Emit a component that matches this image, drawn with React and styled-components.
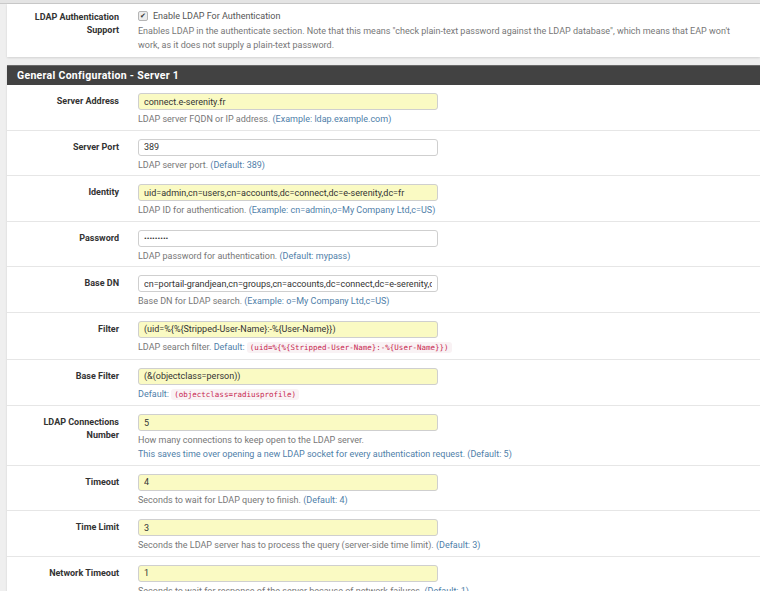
import React from 'react';
import styled, { createGlobalStyle } from 'styled-components';

const GlobalStyle = createGlobalStyle`
	body {
		margin: 0;
		background: #efefef;
		font-family: Roboto, 'Liberation Sans', sans-serif;
		color: #333;
	}
`;

const blue = '#4f80a9';

const fields = [
	{
		label: 'Server Address',
		value: 'connect.e-serenity.fr',
		filled: true,
		help: [['LDAP server FQDN or IP address. ', '(Example: ldap.example.com)']]
	},
	{
		label: 'Server Port',
		value: '389',
		help: [['LDAP server port. ', '(Default: 389)']]
	},
	{
		label: 'Identity',
		value: 'uid=admin,cn=users,cn=accounts,dc=connect,dc=e-serenity,dc=fr',
		filled: true,
		help: [['LDAP ID for authentication. ', '(Example: cn=admin,o=My Company Ltd,c=US)']]
	},
	{
		label: 'Password',
		value: '•••••••••',
		secret: true,
		help: [['LDAP password for authentication. ', '(Default: mypass)']]
	},
	{
		label: 'Base DN',
		value: 'cn=portail-grandjean,cn=groups,cn=accounts,dc=connect,dc=e-serenity,dc=fr',
		help: [['Base DN for LDAP search. ', '(Example: o=My Company Ltd,c=US)']]
	},
	{
		label: 'Filter',
		value: '(uid=%{%{Stripped-User-Name}:-%{User-Name}})',
		filled: true,
		help: [['LDAP search filter. ', 'Default:', '(uid=%{%{Stripped-User-Name}:-%{User-Name}})']]
	},
	{
		label: 'Base Filter',
		value: '(&(objectclass=person))',
		filled: true,
		help: [['', 'Default:', '(objectclass=radiusprofile)']]
	},
	{
		label: ['LDAP Connections', 'Number'],
		value: '5',
		filled: true,
		help: [
			['How many connections to keep open to the LDAP server.', ''],
			['', 'This saves time over opening a new LDAP socket for every authentication request. (Default: 5)']
		]
	},
	{
		label: 'Timeout',
		value: '4',
		filled: true,
		help: [['Seconds to wait for LDAP query to finish. ', '(Default: 4)']]
	},
	{
		label: 'Time Limit',
		value: '3',
		filled: true,
		help: [['Seconds the LDAP server has to process the query (server-side time limit). ', '(Default: 3)']]
	},
	{
		label: 'Network Timeout',
		value: '1',
		filled: true,
		help: [['Seconds to wait for response of the server because of network failures. ', '(Default: 1)']]
	}
];

export default function App() {
	return (
		<Page>
			<GlobalStyle />
			<TopStrip />
			<Panel>
				<Row $top>
					<Label>
						LDAP Authentication
						<br />
						Support
					</Label>
					<div>
						<CheckLine>
							<CheckBox>✔</CheckBox>
							Enable LDAP For Authentication
						</CheckLine>
						<Help $tight>
							Enables LDAP in the authenticate section. Note that this means "check plain-text password
							against the LDAP database", which means that EAP won't work, as it does not supply a
							plain-text password.
						</Help>
					</div>
				</Row>
			</Panel>
			<Panel $gap>
				<Heading>General Configuration - Server 1</Heading>
				{fields.map((f, i) => (
					<Row key={i}>
						<Label>
							{Array.isArray(f.label) ? (
								<>
									{f.label[0]}
									<br />
									{f.label[1]}
								</>
							) : (
								f.label
							)}
						</Label>
						<div>
							<Input
								readOnly
								$filled={f.filled}
								$secret={f.secret}
								value={f.value}
							/>
							<Help>
								{f.help.map((line, j) => (
									<div key={j}>
										{line[0]}
										{line[1] && <Info>{line[1]}</Info>}
										{line[2] && (
											<>
												{' '}
												<Code>{line[2]}</Code>
											</>
										)}
									</div>
								))}
							</Help>
						</div>
					</Row>
				))}
			</Panel>
		</Page>
	);
}

const Page = styled.div`
	padding-left: 7px;
	min-height: 591px;
`;

const TopStrip = styled.div`
	height: 3px;
	margin-left: -7px;
	background: #e4e4e4;
	border-bottom: 1px solid #c9c9c9;
`;

const Panel = styled.div`
	background: #fff;
	margin-top: ${({ $gap }) => ($gap ? '8px' : '0')};
	box-shadow: 0 1px 2px rgba(0, 0, 0, 0.12);
`;

const Heading = styled.div`
	background: #424242;
	color: #fff;
	font-weight: bold;
	font-size: 10.5px;
	letter-spacing: 0.3px;
	height: 19px;
	line-height: 19px;
	padding-left: 10px;
	border-top: 1px solid #6a6a6a;
`;

const Row = styled.div`
	display: grid;
	grid-template-columns: 112px 1fr;
	column-gap: 19px;
	padding: ${({ $top }) => ($top ? '5px 8px 5px 0' : '8px 8px 3.6px 0')};
	border-bottom: ${({ $top }) => ($top ? 'none' : '1px solid #e6e6e6')};
	&:last-child {
		border-bottom: none;
	}
`;

const Label = styled.div`
	text-align: right;
	font-weight: bold;
	font-size: 9px;
	line-height: 13px;
	padding-top: 2px;
	color: #333;
`;

const Input = styled.input`
	display: block;
	box-sizing: border-box;
	width: 300px;
	height: 17px;
	margin: 0;
	padding: 0 5px;
	border: 1px solid #cfcfcf;
	border-radius: 3px;
	background: ${({ $filled }) => ($filled ? '#fafac3' : '#fff')};
	font-family: Roboto, 'Liberation Sans', sans-serif;
	font-size: ${({ $secret }) => ($secret ? '8px' : '9px')};
	color: #333;
	outline: none;
`;

const CheckLine = styled.div`
	display: flex;
	align-items: center;
	gap: 5px;
	font-size: 9px;
	line-height: 14px;
	color: #555;
`;

const CheckBox = styled.span`
	display: inline-flex;
	align-items: center;
	justify-content: center;
	width: 8px;
	height: 8px;
	border: 1px solid #b5b5b5;
	border-radius: 2px;
	background: #ececec;
	font-size: 7px;
	line-height: 1;
	color: #333;
`;

const Help = styled.div`
	margin-top: ${({ $tight }) => ($tight ? '1px' : '2px')};
	font-size: 9px;
	line-height: 14px;
	color: #777;
`;

const Info = styled.span`
	color: ${blue};
`;

const Code = styled.code`
	font-family: 'DejaVu Sans Mono', 'Liberation Mono', monospace;
	font-size: 7.5px;
	color: #c7254e;
	background: #f9f2f4;
	border-radius: 3px;
	padding: 1px 3px;
`;
